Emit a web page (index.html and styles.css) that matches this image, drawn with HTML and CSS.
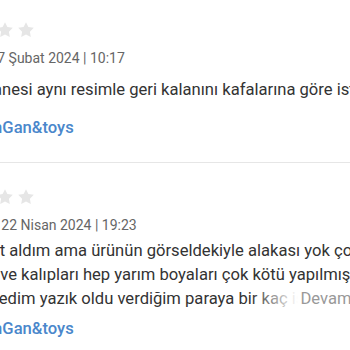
FILE: index.html
```html
<html>
  <head>
<link rel="stylesheet" href="styles.css">
  </head>
  <body>
    <div class="reviews">
      <div class="review">
        <div class="stars">
          <svg class="star on" viewBox="0 0 24 24"><path d="M12 1.5l3.2 6.6 7.2 1-5.2 5.1 1.2 7.2L12 18l-6.4 3.4 1.2-7.2L1.6 9.1l7.2-1z"/></svg>
          <svg class="star on" viewBox="0 0 24 24"><path d="M12 1.5l3.2 6.6 7.2 1-5.2 5.1 1.2 7.2L12 18l-6.4 3.4 1.2-7.2L1.6 9.1l7.2-1z"/></svg>
          <svg class="star on" viewBox="0 0 24 24"><path d="M12 1.5l3.2 6.6 7.2 1-5.2 5.1 1.2 7.2L12 18l-6.4 3.4 1.2-7.2L1.6 9.1l7.2-1z"/></svg>
          <svg class="star" viewBox="0 0 24 24"><path d="M12 1.5l3.2 6.6 7.2 1-5.2 5.1 1.2 7.2L12 18l-6.4 3.4 1.2-7.2L1.6 9.1l7.2-1z"/></svg>
          <svg class="star" viewBox="0 0 24 24"><path d="M12 1.5l3.2 6.6 7.2 1-5.2 5.1 1.2 7.2L12 18l-6.4 3.4 1.2-7.2L1.6 9.1l7.2-1z"/></svg>
        </div>
        <div class="meta">Ö** K** | 17 Şubat 2024 | 10:17</div>
        <p class="text">
          <span class="line">den bir tanesi aynı resimle geri kalanını kafalarına göre istedikleri gibi göndermişler</span>
        </p>
        <div class="seller">AslanhanGan&amp;toys</div>
      </div>
      <div class="review long">
        <div class="stars">
          <svg class="star on" viewBox="0 0 24 24"><path d="M12 1.5l3.2 6.6 7.2 1-5.2 5.1 1.2 7.2L12 18l-6.4 3.4 1.2-7.2L1.6 9.1l7.2-1z"/></svg>
          <svg class="star on" viewBox="0 0 24 24"><path d="M12 1.5l3.2 6.6 7.2 1-5.2 5.1 1.2 7.2L12 18l-6.4 3.4 1.2-7.2L1.6 9.1l7.2-1z"/></svg>
          <svg class="star on" viewBox="0 0 24 24"><path d="M12 1.5l3.2 6.6 7.2 1-5.2 5.1 1.2 7.2L12 18l-6.4 3.4 1.2-7.2L1.6 9.1l7.2-1z"/></svg>
          <svg class="star" viewBox="0 0 24 24"><path d="M12 1.5l3.2 6.6 7.2 1-5.2 5.1 1.2 7.2L12 18l-6.4 3.4 1.2-7.2L1.6 9.1l7.2-1z"/></svg>
          <svg class="star" viewBox="0 0 24 24"><path d="M12 1.5l3.2 6.6 7.2 1-5.2 5.1 1.2 7.2L12 18l-6.4 3.4 1.2-7.2L1.6 9.1l7.2-1z"/></svg>
        </div>
        <div class="meta">D**** A** | 22 Nisan 2024 | 19:23</div>
        <p class="text">
          <span class="line">olarak set aldım ama ürünün görseldekiyle alakası yok çok kötü</span>
          <span class="line">detayları ve kalıpları hep yarım boyaları çok kötü yapılmış hiç</span>
          <span class="line">hiç sevmedim yazık oldu verdiğim paraya bir kaç işe yaramaz figür için</span>
          <span class="more">Devamını oku</span>
        </p>
        <div class="seller">AslanhanGan&amp;toys</div>
      </div>
    </div>
  </body>
</html>
```

FILE: styles.css
```css
body{
  margin: 0;
  background: #fff;
  font-family: Roboto, "Noto Sans", sans-serif;
  overflow: hidden;
}
.reviews{
  width: 480px;
  margin-left: -67px;
  margin-top: -4px;
}
.review{
  padding: 25px 0 22px;
  border-bottom: 1px solid #e6e6e6;
}
.stars{
  display: flex;
  gap: 3px;
  height: 18px;
}
.star{
  width: 18px;
  height: 18px;
  fill: #e6e6e6;
}
.star.on{
  fill: #ffc000;
}
.meta{
  margin-top: 9px;
  font-size: 14px;
  line-height: 20px;
  color: #666;
  white-space: nowrap;
}
.text{
  position: relative;
  margin: 10px 0 0;
  width: 467px;
  font-size: 16.6px;
  line-height: 24px;
  color: #333;
  overflow: hidden;
}
.line{
  display: block;
  white-space: nowrap;
}
.more{
  position: absolute;
  right: 0;
  bottom: 0;
  padding-left: 50px;
  color: #999;
  background: linear-gradient(to right, rgba(255,255,255,0), #fff 48px);
}
.seller{
  margin-top: 14px;
  font-size: 16.6px;
  line-height: 24px;
  color: #4a87cb;
  font-weight: 500;
}
.long .text{
  margin-top: 4px;
}
.long .seller{
  margin-top: 6px;
}
```
